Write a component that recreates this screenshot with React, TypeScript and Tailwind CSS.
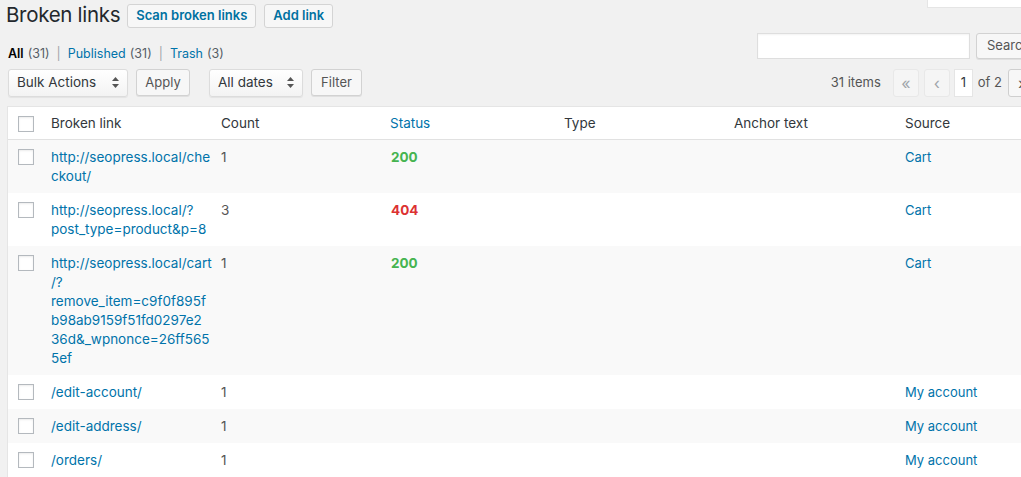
import React from "react";

type Row = {
  lines: string[];
  count: string;
  status?: "200" | "404";
  source: string;
  striped: boolean;
  h: string;
};

const rows: Row[] = [
  { lines: ["http://seopress.local/che", "ckout/"], count: "1", status: "200", source: "Cart", striped: true, h: "h-[53px]" },
  { lines: ["http://seopress.local/?", "post_type=product&p=8"], count: "3", status: "404", source: "Cart", striped: false, h: "h-[53px]" },
  {
    lines: [
      "http://seopress.local/cart",
      "/?",
      "remove_item=c9f0f895f",
      "b98ab9159f51fd0297e2",
      "36d&_wpnonce=26ff565",
      "5ef",
    ],
    count: "1",
    status: "200",
    source: "Cart",
    striped: true,
    h: "h-[129px]",
  },
  { lines: ["/edit-account/"], count: "1", source: "My account", striped: false, h: "h-[34px]" },
  { lines: ["/edit-address/"], count: "1", source: "My account", striped: true, h: "h-[34px]" },
  { lines: ["/orders/"], count: "1", source: "My account", striped: false, h: "h-[34px]" },
];

const cols = "grid grid-cols-[33px_170px_169px_174px_170px_171px_1fr]";

// up/down arrows on the wp selects
const SelectArrows = () => (
  <svg width="7" height="11" viewBox="0 0 7 11" className="text-[#555]">
    <path d="M3.5 0 L7 4 H0 Z" fill="currentColor" />
    <path d="M3.5 11 L7 7 H0 Z" fill="currentColor" />
  </svg>
);

const Checkbox = () => (
  <div className="w-4 h-4 bg-white border border-[#b4b9be] shadow-[inset_0_1px_2px_rgba(0,0,0,0.08)]" />
);

const SelectBox = ({ label, w }: { label: string; w: string }) => (
  <div
    className={`${w} h-[28px] flex items-center justify-between pl-[8px] pr-[8px] rounded-[3px] border border-[#dcdcdc] bg-gradient-to-b from-white to-[#f3f3f3] shadow-[0_1px_1px_rgba(0,0,0,0.06)] text-[13.5px] text-[#32373c]`}
  >
    <span>{label}</span>
    <SelectArrows />
  </div>
);

const GrayButton = ({ label, w, h = "h-[27px]" }: { label: string; w: string; h?: string }) => (
  <div
    className={`${w} ${h} flex items-center justify-center rounded-[3px] border border-[#d2d2d2] bg-[#f7f7f7] shadow-[0_1px_0_#e0e0e0] text-[13px] text-[#555] whitespace-nowrap`}
  >
    {label}
  </div>
);

const PageBtn = ({ children }: { children: React.ReactNode }) => (
  <div className="w-[26px] h-[28px] shrink-0 flex items-center justify-center rounded-[3px] border border-[#e8e8e8] bg-[#f5f5f5] text-[16px] text-[#a0a5aa]">
    {children}
  </div>
);

export default function App() {
  return (
    <div
      className="relative w-[1021px] h-[477px] overflow-hidden bg-[#f1f1f1] text-[13px] text-[#32373c]"
      style={{ fontFamily: "Inter, 'Noto Sans', sans-serif" }}
    >
      {/* screen options box cut off at the top */}
      <div className="absolute top-[-20px] left-[927px] w-[120px] h-[28px] bg-white border border-[#e5e5e5]" />

      {/* title row */}
      <div className="flex items-center h-[30px] pl-[6px] pt-[1px]">
        <h1 className="text-[20.5px] leading-none text-[#23282d] tracking-[-0.3px]">Broken links</h1>
        <div className="ml-[7px] h-[24px] px-[8px] flex items-center rounded-[3px] border border-[#d4d4d4] bg-[#f7f7f7] text-[13px] font-semibold text-[#0071a1]">
          Scan broken links
        </div>
        <div className="ml-[8px] h-[24px] px-[8px] flex items-center rounded-[3px] border border-[#d4d4d4] bg-[#f7f7f7] text-[13px] font-semibold text-[#0071a1]">
          Add link
        </div>
      </div>

      {/* views + search */}
      <div className="flex items-center h-[26px] mt-[3px]">
        <div className="pl-[8px] pt-[16px] text-[12.5px] text-[#555d66] flex items-center">
          <span className="font-semibold text-[#000]">All</span>
          <span className="ml-[4px]">(31)</span>
          <span className="mx-[7px] text-[#a0a5aa]">|</span>
          <span className="text-[#0073aa]">Published</span>
          <span className="ml-[4px]">(31)</span>
          <span className="mx-[7px] text-[#a0a5aa]">|</span>
          <span className="text-[#0073aa]">Trash</span>
          <span className="ml-[4px]">(3)</span>
        </div>
        <div className="ml-auto flex items-center gap-[6px] -mr-[55px]">
          <div className="w-[213px] h-[26px] bg-white border border-[#dedede] shadow-[inset_0_1px_2px_rgba(0,0,0,0.05)]" />
          <div className="w-[100px] h-[26px] flex items-center pl-[10px] rounded-[3px] border border-[#d2d2d2] bg-[#f7f7f7] shadow-[0_1px_0_#e0e0e0] text-[13px] text-[#555] whitespace-nowrap">
            Search Links
          </div>
        </div>
      </div>

      {/* tablenav */}
      <div className="flex items-center h-[29px] mt-[9px]">
        <div className="pl-[8px] flex items-center">
          <SelectBox label="Bulk Actions" w="w-[120px]" />
          <div className="ml-[8px]">
            <GrayButton label="Apply" w="w-[54px]" />
          </div>
          <div className="ml-[19px]">
            <SelectBox label="All dates" w="w-[94px]" />
          </div>
          <div className="ml-[8px]">
            <GrayButton label="Filter" w="w-[51px]" />
          </div>
        </div>
        <div className="ml-auto flex items-center -mr-[13px]">
          <span className="text-[13px] text-[#555] mr-[12px]">31 items</span>
          <PageBtn>«</PageBtn>
          <div className="ml-[5px]">
            <PageBtn>‹</PageBtn>
          </div>
          <div className="ml-[4px] w-[19px] h-[28px] bg-white border border-[#e5e5e5] flex items-center justify-center text-[13px] text-[#32373c]">
            1
          </div>
          <span className="ml-[5px] text-[13px] text-[#555]">of 2</span>
          <div className="ml-[6px]">
            <div className="w-[26px] h-[28px] flex items-center justify-center rounded-[3px] border border-[#cfcfcf] bg-[#f7f7f7] text-[16px] text-[#555]">
              ›
            </div>
          </div>
        </div>
      </div>

      {/* table */}
      <div className="ml-[7px] mt-[9px] w-[1030px] bg-white border border-[#e5e5e5] text-[13.5px]">
        <div className={`${cols} h-[33px] items-center border-b border-[#e1e1e1] text-[#32373c]`}>
          <div className="pl-[10px] pt-[1px]">
            <Checkbox />
          </div>
          <div className="pl-[10px]">Broken link</div>
          <div className="pl-[10px]">Count</div>
          <div className="pl-[10px] text-[#0073aa]">Status</div>
          <div className="pl-[10px]">Type</div>
          <div className="pl-[10px]">Anchor text</div>
          <div className="pl-[10px]">Source</div>
        </div>
        {rows.map((r, i) => (
          <div
            key={i}
            className={`${cols} ${r.h} items-start pt-[8px] leading-[19px] ${r.striped ? "bg-[#f9f9f9]" : "bg-white"}`}
          >
            <div className="pl-[10px] pt-[1px]">
              <Checkbox />
            </div>
            <div className="pl-[10px] text-[#0073aa]">
              {r.lines.map((l, j) => (
                <div key={j} className="whitespace-nowrap">
                  {l}
                </div>
              ))}
            </div>
            <div className="pl-[10px] text-[#555]">{r.count}</div>
            <div className="pl-[11px] font-bold">
              {r.status === "200" && <span className="text-[#46b450]">200</span>}
              {r.status === "404" && <span className="text-[#dc3232]">404</span>}
            </div>
            <div />
            <div />
            <div className="pl-[10px] text-[13px] text-[#0073aa]">{r.source}</div>
          </div>
        ))}
      </div>
    </div>
  );
}
